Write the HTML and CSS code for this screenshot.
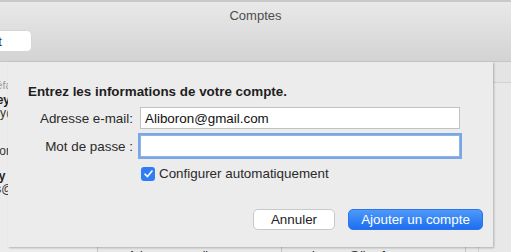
FILE: index.html
```html
<!DOCTYPE html>
<html lang="fr">
<head>
  <meta charset="UTF-8" />
  <meta name="viewport" content="width=device-width, initial-scale=1.0" />
  <title>Comptes</title>
  <link rel="stylesheet" href="styles.css">
</head>
<body>
  <div class="window">
    <div class="titlebar">
      <div class="title">Comptes</div>
      <div class="toolbar">
        <button class="tool-btn">Par défaut</button>
      </div>
    </div>

    <div class="content">
      <div class="sidebar">
        <ul class="accounts">
          <li class="group">Par défaut</li>
          <li class="name">Harvey</li>
          <li class="mail">harvey@live.fr</li>
          <li class="name">Prof</li>
          <li class="mail">aliboron@free.fr</li>
          <li class="name">Casey</li>
          <li class="mail">cases@gmail.com</li>
          <li class="name yahoo">Yahoo</li>
        </ul>
      </div>
      <div class="main">
        <div class="detail-row">
          <span class="cell">Adresse e-mail :</span>
          <span class="cell">harvey@live.fr</span>
        </div>
      </div>
      <div class="edge"></div>
    </div>

    <!-- sheet dialog over the window -->
    <div class="sheet">
      <h2>Entrez les informations de votre compte.</h2>
      <div class="form">
        <label for="email">Adresse e-mail:</label>
        <input type="text" id="email" value="Aliboron@gmail.com" />
        <label for="pass">Mot de passe :</label>
        <input type="password" id="pass" class="focused" />
        <span></span>
        <label class="check"><span class="box">
          <svg width="9" height="8" viewBox="0 0 9 8"><path d="M1 4.2 L3.5 6.6 L8 1" fill="none" stroke="#fff" stroke-width="1.6" stroke-linecap="round" stroke-linejoin="round"/></svg>
        </span>Configurer automatiquement</label>
      </div>
      <div class="actions">
        <button class="btn">Annuler</button>
        <button class="btn primary">Ajouter un compte</button>
      </div>
    </div>
  </div>
</body>
</html>
```

FILE: styles.css
```css
* { box-sizing: border-box; }
body { margin: 0; font-family: "Liberation Sans", Arial, sans-serif; font-size: 13px; color: #222; background: #e8e8e8; }
.window { position: relative; width: 511px; height: 252px; overflow: hidden; }

.titlebar { height: 62px; border-top: 2px solid #c9c9c9; background: linear-gradient(#e9e9e9, #d3d3d3); border-bottom: 1px solid #c6c6c6; }
.title { text-align: center; color: #4d4d4d; font-size: 13px; padding-top: 6px; }
.toolbar { display: flex; padding-top: 7px; margin-left: -78px; }
.tool-btn { flex: none; width: 110px; height: 22px; border: 1px solid #d6d6d6; border-radius: 5px; background: #fff; font: 13px "Liberation Sans", Arial, sans-serif; color: #333; text-align: right; padding: 0 29px 0 0; white-space: nowrap; }

.content { display: flex; height: 190px; }
.sidebar { width: 98px; border-right: 1px solid #c4c4c4; background: #ececec; overflow: hidden; }
.accounts { list-style: none; margin: 0 0 0 -30px; padding: 17px 0 0; }
.accounts li { line-height: 13px; white-space: nowrap; font-size: 12px; }
.accounts .group { color: #9a9a9a; font-size: 11px; margin-bottom: 2px; }
.accounts .name { font-weight: bold; margin-top: 12px; }
.accounts .group + .name { margin-top: 1px; }
.accounts .mail { color: #333; }
.accounts .yahoo { margin-top: 40px; padding-left: 50px; font-weight: normal; }
.main { flex: 1; display: flex; flex-direction: column; justify-content: flex-end; }
.detail-row { display: flex; height: 8px; border-top: 1px solid #cfcfcf; }
.cell { width: 184px; padding-left: 30px; border-right: 1px solid #c4c4c4; line-height: 22px; font-size: 12px; white-space: nowrap; overflow: hidden; }
.edge { width: 33px; border-left: 1px solid #cfcfcf; background: linear-gradient(#e4e4e4 20px, #d2d2d2 20px, #d2d2d2 21px, #e8e8e8 21px); }

.sheet { position: absolute; left: 8px; top: 62px; width: 485px; height: 185px; background: #ececec; box-shadow: 1px 1px 2px rgba(0,0,0,0.25); padding: 22px 10px 0 20px; font-size: 13.4px; }
.sheet h2 { margin: 0; font-size: 13.4px; font-weight: bold; line-height: 16px; color: #1e1e1e; }
.form { display: grid; grid-template-columns: 105px 320px; column-gap: 7px; row-gap: 6px; margin-top: 7px; align-items: center; }
.form label { text-align: right; color: #2a2a2a; white-space: nowrap; }
.form input { height: 22px; border: 1px solid #c2c2c2; background: #fff; font: 13.4px "Liberation Sans", Arial, sans-serif; color: #111; padding: 0 4px; outline: none; }
.form input.focused { border-color: #8fb3e6; box-shadow: 0 0 0 2px #78a6e6; }
.form .check { text-align: left; display: flex; align-items: center; gap: 4px; margin-top: 3px; margin-left: 1px; }
.box { width: 14px; height: 14px; border-radius: 3px; background: #2f7df6; display: flex; align-items: center; justify-content: center; }

.actions { display: flex; justify-content: flex-end; gap: 13px; margin-top: 28px; }
.btn { height: 21px; border-radius: 5px; border: 1px solid #c9c9c9; background: #fff; font: 13.4px "Liberation Sans", Arial, sans-serif; color: #222; width: 82px; padding: 0; }
.btn.primary { width: 135px; border-color: #2c74ee; background: linear-gradient(#4e99f9, #1d6ef1); color: #fff; }
```
